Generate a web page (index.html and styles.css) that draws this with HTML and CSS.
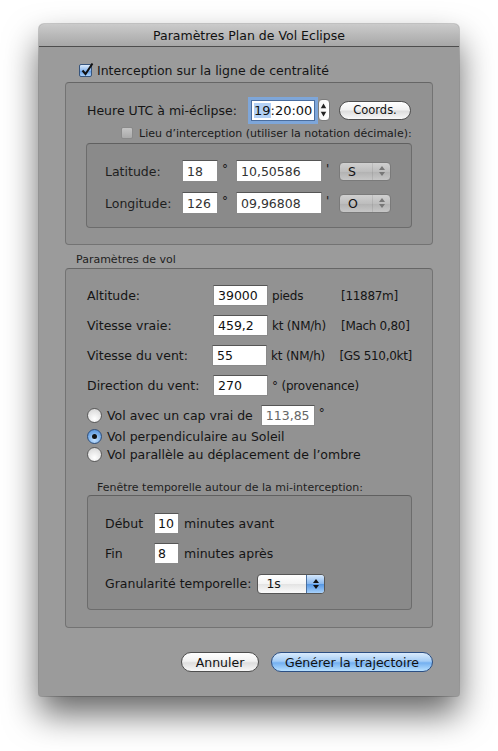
FILE: index.html
```html
<!DOCTYPE html>
<html lang="fr">
<head>
<meta charset="utf-8">
<title>Paramètres Plan de Vol Eclipse</title>
<link rel="stylesheet" href="styles.css">
</head>
<body>
<div class="window">
  <div class="titlebar">Paramètres Plan de Vol Eclipse</div>
  <div class="content">
    <div class="check-row top-check">
      <span class="checkbox checked">
        <svg width="16" height="16" viewBox="0 0 16 16"><path d="M3.5 8.5 L6.5 12 L13.5 1.5" fill="none" stroke="#111" stroke-width="2"/></svg>
      </span>
      <span>Interception sur la ligne de centralité</span>
    </div>

    <div class="box box1">
      <div class="utc-row">
        <span class="utc-label">Heure UTC à mi-éclipse:</span>
        <span class="field time"><span class="sel">19</span>:20:00</span>
        <span class="stepper">
          <svg width="12" height="22" viewBox="0 0 12 22"><path d="M6 4 L9 9 L3 9 Z" fill="#222"/><path d="M6 18 L9 13 L3 13 Z" fill="#222"/></svg>
        </span>
        <span class="pill coords">Coords.</span>
      </div>
      <div class="check-row small-check">
        <span class="checkbox off"></span>
        <span>Lieu d’interception (utiliser la notation décimale):</span>
      </div>
      <div class="box box2">
        <div class="coord-row">
          <span class="coord-label">Latitude:</span>
          <span class="field deg">18</span>
          <span class="mark">°</span>
          <span class="field mins">10,50586</span>
          <span class="mark m2">'</span>
          <span class="popup grey"><span class="pv">S</span><span class="arrows"><svg width="10" height="14" viewBox="0 0 10 14"><path d="M5 2 L8 6 L2 6 Z" fill="#777"/><path d="M5 12 L8 8 L2 8 Z" fill="#777"/></svg></span></span>
        </div>
        <div class="coord-row">
          <span class="coord-label">Longitude:</span>
          <span class="field deg">126</span>
          <span class="mark">°</span>
          <span class="field mins">09,96808</span>
          <span class="mark m2">'</span>
          <span class="popup grey"><span class="pv">O</span><span class="arrows"><svg width="10" height="14" viewBox="0 0 10 14"><path d="M5 2 L8 6 L2 6 Z" fill="#777"/><path d="M5 12 L8 8 L2 8 Z" fill="#777"/></svg></span></span>
        </div>
      </div>
    </div>

    <div class="section-label">Paramètres de vol</div>
    <div class="box box3">
      <div class="param-row">
        <span class="param-label">Altitude:</span>
        <span class="field pfield">39000</span>
        <span class="unit">pieds</span>
        <span class="extra">[11887m]</span>
      </div>
      <div class="param-row">
        <span class="param-label">Vitesse vraie:</span>
        <span class="field pfield">459,2</span>
        <span class="unit">kt (NM/h)</span>
        <span class="extra">[Mach 0,80]</span>
      </div>
      <div class="param-row">
        <span class="param-label">Vitesse du vent:</span>
        <span class="field pfield">55</span>
        <span class="unit">kt (NM/h)</span>
        <span class="extra">[GS 510,0kt]</span>
      </div>
      <div class="param-row">
        <span class="param-label">Direction du vent:</span>
        <span class="field pfield">270</span>
        <span class="unit wide">° (provenance)</span>
      </div>

      <div class="radio-row r1">
        <span class="radio"></span>
        <span>Vol avec un cap vrai de</span>
        <span class="field cap">113,85</span>
        <span class="mark">°</span>
      </div>
      <div class="radio-row r2">
        <span class="radio on"><span class="dot"></span></span>
        <span>Vol perpendiculaire au Soleil</span>
      </div>
      <div class="radio-row r3">
        <span class="radio"></span>
        <span>Vol parallèle au déplacement de l’ombre</span>
      </div>

      <div class="section-label sub">Fenêtre temporelle autour de la mi-interception:</div>
      <div class="box box4">
        <div class="time-row">
          <span class="time-label">Début</span>
          <span class="field small">10</span>
          <span class="unit">minutes avant</span>
        </div>
        <div class="time-row">
          <span class="time-label">Fin</span>
          <span class="field small">8</span>
          <span class="unit">minutes après</span>
        </div>
        <div class="time-row">
          <span>Granularité temporelle:</span>
          <span class="popup aqua"><span class="pv">1s</span><span class="arrows blue"><svg width="10" height="14" viewBox="0 0 10 14"><path d="M5 2 L8 6 L2 6 Z" fill="#111"/><path d="M5 12 L8 8 L2 8 Z" fill="#111"/></svg></span></span>
        </div>
      </div>
    </div>

    <div class="buttons">
      <span class="pill cancel">Annuler</span>
      <span class="pill default">Générer la trajectoire</span>
    </div>
  </div>
</div>
</body>
</html>
```

FILE: styles.css
```css
* { box-sizing: border-box; }
html, body { margin: 0; padding: 0; background: #ffffff; }
body {
  font-family: "DejaVu Sans", "Noto Sans", sans-serif;
  font-size: 12px;
  color: #151515;
  min-height: 751px;
  padding: 24px 0 55px 39px;
}
.window {
  width: 420px;
  height: 672px;
  background: #9b9b9b;
  border-radius: 5px 5px 3px 3px;
  box-shadow: 0 18px 34px rgba(0,0,0,0.6), 0 0 0 1px rgba(0,0,0,0.18);
  overflow: hidden;
  white-space: nowrap;
}
.titlebar {
  height: 23px;
  background: linear-gradient(#cbcbcb, #a7a7a7);
  border-bottom: 1px solid #4d4d4d;
  text-align: center;
  font-size: 12.5px;
  line-height: 23px;
  color: #111;
}
.content { padding: 0 26px; }

.check-row { display: flex; align-items: center; }
.top-check { height: 16px; margin-top: 15px; padding-left: 14px; font-size: 12.5px; }
.top-check .checkbox { margin-right: 5px; }

.checkbox {
  position: relative;
  width: 13px; height: 13px;
  border-radius: 2px;
  flex: none;
}
.checkbox.checked {
  background: linear-gradient(#dcebfb, #8cb8ee 50%, #5e97e0 51%, #a9d0fa);
  border: 1px solid #37557d;
}
.checkbox.checked svg { position: absolute; left: -1px; top: -3px; }
.checkbox.off {
  background: linear-gradient(#c4c4c4, #aaaaaa);
  border: 1px solid #8a8a8a;
}

.box {
  background: rgba(0,0,0,0.055);
  border: 1px solid rgba(0,0,0,0.22);
  border-top-color: rgba(0,0,0,0.3);
  border-radius: 4px;
}
.box1 { margin-top: 4px; height: 163px; padding: 15px 20px 0 20px; }

.utc-row { display: flex; align-items: center; height: 24px; padding-left: 1px; }
.utc-label { width: 164px; font-size: 12.5px; }
.field {
  display: inline-flex; align-items: center;
  background: #fff;
  border: 1px solid #8a8a8a;
  border-top-color: #555;
  height: 21px;
  padding: 0 4px;
  font-size: 12.5px;
  color: #111;
  flex: none;
}
.field.time {
  width: 64px; height: 21px;
  box-shadow: 0 0 0 3px #7ea6d9;
  border-color: #4a6ea0;
  font-size: 13px;
  padding: 0 2px;
}
.sel { background: #b3d1f6; }
.stepper {
  margin-left: 3px;
  width: 12px; height: 22px;
  background: linear-gradient(90deg, #f4f4f4, #ffffff);
  border: 1px solid #7d7d7d;
  border-radius: 4px;
  display: flex;
}
.stepper svg { margin-left: -1px; margin-top: -1px; }

.pill {
  display: inline-flex; align-items: center; justify-content: center;
  height: 20px;
  border-radius: 10px;
  border: 1px solid #4e4e4e;
  background: linear-gradient(#ffffff, #f2f2f2 45%, #dedede 55%, #f8f8f8);
  font-size: 12px;
  color: #111;
}
.coords { margin-left: 9px; width: 72px; height: 19px; font-size: 11.5px; }

.small-check { height: 14px; margin-top: 4px; padding-left: 35px; font-size: 11px; color: #1a1a1a; }
.small-check .checkbox { width: 12px; height: 12px; margin-right: 6px; }

.box2 { margin-top: 3px; height: 85px; padding: 16px 0 0 18px; display: flex; flex-direction: column; gap: 10px; }
.coord-row { display: flex; align-items: center; height: 22px; }
.coord-label { width: 77px; font-size: 12.5px; color: #1e1e1e; }
.field.deg { width: 36px; height: 22px; color: #333; }
.field.mins { width: 86px; height: 22px; color: #333; }
.mark { width: 18px; padding-left: 4px; font-size: 12px; align-self: flex-start; margin-top: 2px; }
.mark.m2 { width: 17px; }

.popup {
  display: inline-flex; align-items: center;
  height: 19px;
  border-radius: 4px;
  border: 1px solid #6e6e6e;
  font-size: 12.5px;
}
.popup.grey {
  width: 52px;
  background: linear-gradient(#d0d0d0, #bdbdbd 50%, #b1b1b1 51%, #c6c6c6);
  border-color: #7a7a7a;
  color: #111;
}
.popup .pv { flex: 1; padding-left: 8px; }
.popup .arrows { width: 18px; height: 100%; display: flex; align-items: center; justify-content: center; }
.popup.grey .arrows { border-left: 1px solid rgba(0,0,0,0.08); }

.section-label { margin-top: 8px; margin-left: 11px; height: 14px; font-size: 11px; line-height: 14px; color: #1e1e1e; }

.box3 { margin-top: 1px; height: 360px; padding: 16px 20px 0 21px; }
.param-row { display: flex; align-items: center; height: 21px; margin-bottom: 9px; }
.param-label { width: 126px; font-size: 12.5px; }
.field.pfield { width: 55px; }
.unit { margin-left: 4px; font-size: 12.5px; }
.param-row .unit { width: 69px; font-size: 12px; letter-spacing: -0.2px; }
.param-row .unit.wide { width: auto; }
.extra { font-size: 12px; letter-spacing: -0.3px; }

.radio-row { display: flex; align-items: center; font-size: 12.5px; }
.radio-row.r1 { height: 21px; margin-top: 4px; }
.radio-row.r2 { height: 18px; margin-top: 1px; }
.radio-row.r3 { height: 18px; }
.radio {
  width: 15px; height: 15px; border-radius: 50%;
  border: 1px solid #5a5a5a;
  background: radial-gradient(circle at 50% 75%, #ffffff, #e4e4e4 60%, #cfcfcf);
  margin-right: 5px;
  display: flex; align-items: center; justify-content: center;
  flex: none;
}
.radio.on {
  background: radial-gradient(circle at 50% 75%, #c6e2ff, #79aee9 55%, #4a86d4);
  border-color: #2f4f7a;
}
.dot { width: 5px; height: 5px; border-radius: 50%; background: #111; }
.field.cap { width: 54px; margin-left: 8px; color: #666; }
.radio-row .mark { align-self: flex-start; margin-top: 1px; }

.section-label.sub { margin-top: 18px; margin-left: 10px; }
.box4 { margin-top: 0; height: 115px; width: 325px; padding: 17px 0 0 17px; display: flex; flex-direction: column; gap: 9px; }
.time-row { display: flex; align-items: center; height: 21px; font-size: 12.5px; }
.time-label { width: 49px; }
.field.small { width: 25px; padding: 0 3px; }
.time-row .unit { margin-left: 5px; }
.popup.aqua {
  margin-left: 6px;
  width: 68px; height: 20px;
  background: linear-gradient(#ffffff, #f3f3f3 50%, #e3e3e3 51%, #fbfbfb);
  border-color: #555;
}
.popup.aqua .arrows.blue {
  background: linear-gradient(#d5e8fc, #86b6ee 50%, #5596e3 51%, #a7d1fb);
  border-left: 1px solid #4a6f9f;
  border-radius: 0 3px 3px 0;
}

.buttons { display: flex; justify-content: flex-end; gap: 12px; margin-top: 24px; }
.pill.cancel { width: 78px; font-size: 12.5px; }
.pill.default {
  width: 162px; font-size: 12.5px;
  border-color: #2c4f83;
  background: linear-gradient(#d9ebfd, #a5cdf6 45%, #74b0f0 55%, #b7e0ff);
}
```
